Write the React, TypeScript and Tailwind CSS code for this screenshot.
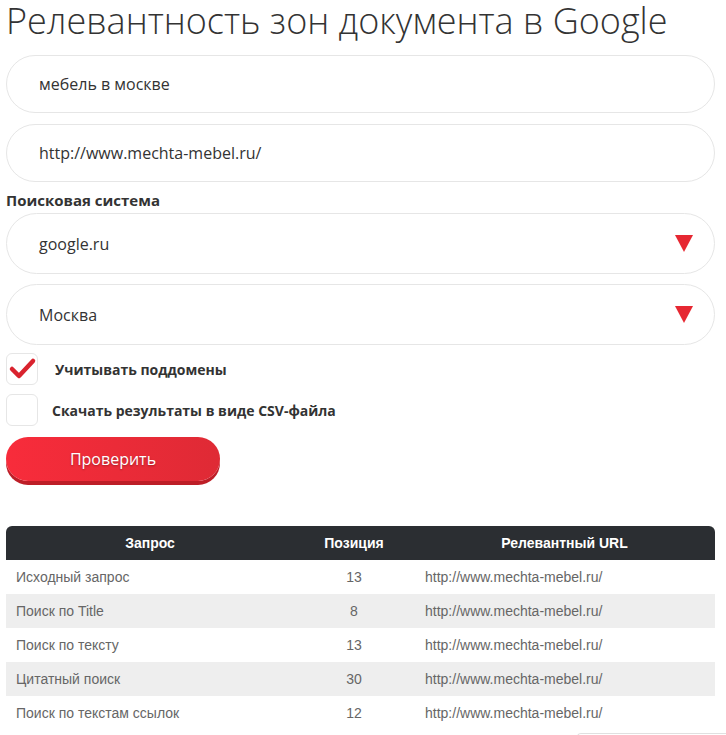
import React from "react";

const rows: [string, string][] = [
  ["Исходный запрос", "13"],
  ["Поиск по Title", "8"],
  ["Поиск по тексту", "13"],
  ["Цитатный поиск", "30"],
  ["Поиск по текстам ссылок", "12"],
];

function Triangle() {
  return (
    <svg width="18" height="17" viewBox="0 0 18 17" className="shrink-0">
      <polygon points="0,0 18,0 9,17" fill="#e62832" />
    </svg>
  );
}

export default function App() {
  return (
    <div className="w-[726px] h-[735px] overflow-hidden bg-white font-['Open_Sans',sans-serif] text-[#333]">
      <div className="pl-[6px] w-[715px]">
        <h1 className="text-[36px] font-light leading-[42px] text-[#333] whitespace-nowrap">
          Релевантность зон документа в Google
        </h1>
        <div className="mt-[13px] h-[58px] rounded-full border border-[#e6e6e6] flex items-center pl-[32px] text-[16px] text-[#333]">
          мебель в москве
        </div>
        <div className="mt-[11px] h-[58px] rounded-full border border-[#e6e6e6] flex items-center pl-[32px] text-[16px] text-[#333]">
          http://www.mechta-mebel.ru/
        </div>
        <div className="mt-[8px] text-[15px] font-bold leading-[20px] text-[#333]">Поисковая система</div>
        <div className="mt-[3px] h-[61px] rounded-full border border-[#e6e6e6] flex items-center justify-between pl-[32px] pr-[21px] text-[16px] text-[#333]">
          <span>google.ru</span>
          <Triangle />
        </div>
        <div className="mt-[10px] h-[61px] rounded-full border border-[#e6e6e6] flex items-center justify-between pl-[32px] pr-[21px] text-[16px] text-[#333]">
          <span>Москва</span>
          <Triangle />
        </div>
        <div className="mt-[8px] flex items-center">
          <div className="w-[32px] h-[32px] rounded-[6px] border border-[#e6e6e6] flex items-center justify-center">
            <svg width="30" height="30" viewBox="0 0 30 30" className="-ml-[1px]">
              <path d="M5 15 L12 22 L26 7" fill="none" stroke="#d9232e" strokeWidth="4.5" strokeLinecap="round" strokeLinejoin="round" />
            </svg>
          </div>
          <span className="ml-[17px] text-[14px] font-bold text-[#333]">Учитывать поддомены</span>
        </div>
        <div className="mt-[9px] flex items-center">
          <div className="w-[32px] h-[32px] rounded-[6px] border border-[#e6e6e6]" />
          <span className="ml-[14px] text-[14px] font-bold text-[#333]">Скачать результаты в виде CSV-файла</span>
        </div>
        <button className="mt-[11px] w-[214px] h-[44px] rounded-full bg-gradient-to-r from-[#f82c3b] to-[#df2a35] text-white text-[16px] shadow-[0_4px_0_#bd1e27] [text-shadow:0_1px_2px_rgba(0,0,0,0.3)] flex items-center justify-center">
          Проверить
        </button>
        <div className="mt-[45px] font-['Liberation_Sans',Arial,sans-serif] text-[14px]">
          <div className="h-[34px] bg-[#2b2e32] rounded-t-[6px] flex items-center text-white font-bold">
            <div className="w-[288px] text-center">Запрос</div>
            <div className="w-[120px] text-center">Позиция</div>
            <div className="flex-1 text-center">Релевантный URL</div>
          </div>
          {rows.map(([q, p], i) => (
            <div key={i} className={`h-[34px] flex items-center text-[#666] ${i % 2 === 1 ? "bg-[#eeeeee]" : "bg-white"}`}>
              <div className="w-[288px] pl-[10px]">{q}</div>
              <div className="w-[120px] text-center">{p}</div>
              <div className="flex-1 pl-[11px]">http://www.mechta-mebel.ru/</div>
            </div>
          ))}
        </div>
      </div>
      <div className="ml-[577px] mt-[3px] h-[20px] rounded-tl-[4px] border-l border-t border-[#e0e0e0]" />
    </div>
  );
}
